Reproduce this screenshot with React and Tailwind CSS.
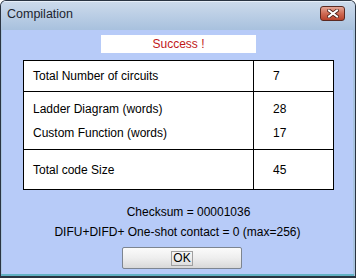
export default function App() {
  const f = { fontFamily: '"Liberation Sans", Arial, sans-serif' };
  return (
    <div className="w-[356px] h-[278px] flex flex-col overflow-hidden rounded-t-[6px] border border-b-2 border-[#2a3442] bg-[#a9c3df]" style={f}>
      <div className="h-[29px] shrink-0 flex items-start justify-between pl-[6px] pr-[10px] bg-gradient-to-b from-[#ccdaeb] to-[#a8c1de] border-t border-[#e6eef8]">
        <span className="mt-[4px] text-[12.5px] leading-[16px] text-[#1c2430]">Compilation</span>
        <div className="mt-[4px] w-[25px] h-[15px] rounded-[3px] border border-[#5b2a22] bg-gradient-to-b from-[#e3a596] via-[#cf6b55] to-[#b8412b] flex items-center justify-center">
          <svg width="12" height="9" viewBox="0 0 12 9">
            <path d="M2 1.5 L10 7.5 M10 1.5 L2 7.5" stroke="#4a1e18" strokeWidth="3.6" strokeLinecap="square" />
            <path d="M2 1.5 L10 7.5 M10 1.5 L2 7.5" stroke="#ffffff" strokeWidth="2" strokeLinecap="square" />
          </svg>
        </div>
      </div>
      <div className="flex-1 ml-[1px] mr-[2px] bg-[#b7cbf8] flex flex-col text-[12px] text-black">
        <div className="mt-[5px] ml-[99px] w-[155px] h-[18px] bg-white text-center leading-[18px] text-[#c01818]">Success !</div>
        <div className="mt-[7px] ml-[21px] w-[311px] border border-black bg-white">
          <div className="flex h-[31px] border-b border-black">
            <div className="w-[230px] border-r border-black pl-[9px] flex items-center">Total Number of circuits</div>
            <div className="flex-1 pl-[19px] flex items-center">7</div>
          </div>
          <div className="flex h-[58px] border-b border-black">
            <div className="w-[230px] border-r border-black pl-[9px] flex flex-col justify-center leading-[24px]">
              <span>Ladder Diagram (words)</span>
              <span>Custom Function (words)</span>
            </div>
            <div className="flex-1 pl-[19px] flex flex-col justify-center leading-[24px]">
              <span>28</span>
              <span>17</span>
            </div>
          </div>
          <div className="flex h-[39px]">
            <div className="w-[230px] border-r border-black pl-[9px] flex items-center">Total code Size</div>
            <div className="flex-1 pl-[19px] flex items-center">45</div>
          </div>
        </div>
        <div className="mt-[12px] leading-[20px] text-center pl-[22px]">Checksum = 00001036</div>
        <div className="leading-[20px] text-center">DIFU+DIFD+ One-shot contact = 0 (max=256)</div>
        <div className="mt-[5px] ml-[120px] w-[120px] h-[22px] rounded-[2px] border border-[#7d8590] bg-gradient-to-b from-[#fbfbfb] via-[#eeeeee] to-[#d8d8d8] flex items-center justify-center">
          <span className="border border-[#a0a0a0] px-[1px] leading-[13px]">OK</span>
        </div>
      </div>
      <div className="h-[2px] mr-[1px] ml-[0px] bg-[#62b2c4]" />
    </div>
  );
}
